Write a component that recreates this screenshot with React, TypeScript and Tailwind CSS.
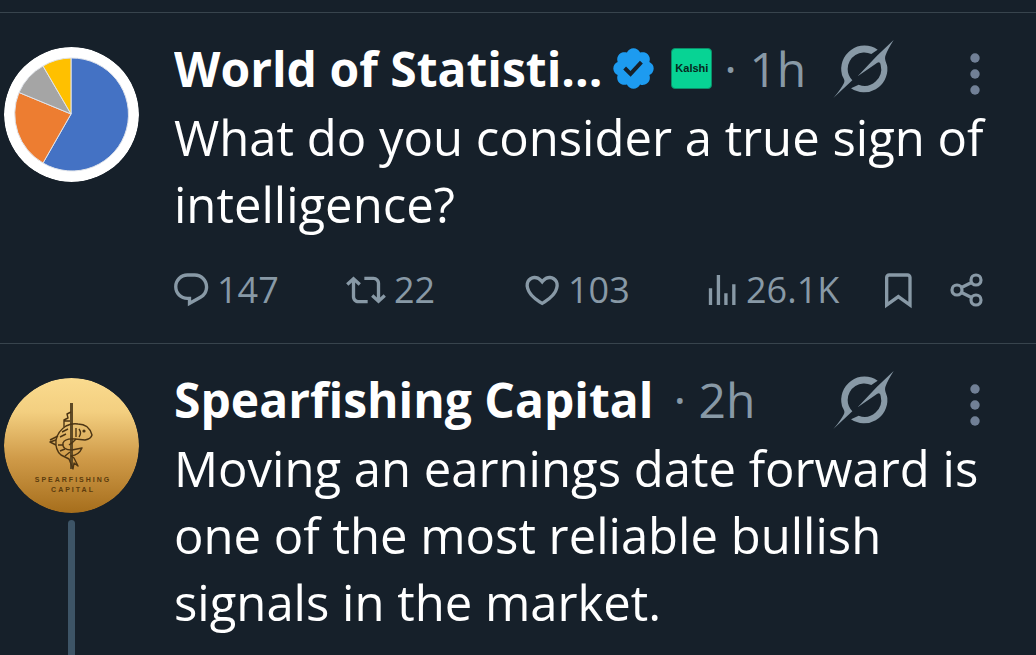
import type { ReactNode } from "react";

type PostProps = {
    avatar: ReactNode;
    name: string;
    badges?: ReactNode;
    time: string;
    children: ReactNode;
    actions?: ReactNode;
    thread?: boolean;
};

function PieAvatar() {
    return (
        <svg viewBox="0 0 135 135" className="size-[135px] rounded-full" aria-hidden="true">
            <circle cx="67.5" cy="67.5" r="67.5" fill="#fff" />
            <g stroke="#dfe3ea" strokeWidth="1">
                <path d="M67 67V11A56.5 56.5 0 1 1 39 116Z" fill="#4472c4" />
                <path d="M67 67L39 116A56.5 56.5 0 0 1 15 45.5Z" fill="#ed7d31" />
                <path d="M67 67L15 45.5A56.5 56.5 0 0 1 39 19Z" fill="#a5a5a5" />
                <path d="M67 67L39 19A56.5 56.5 0 0 1 67 11Z" fill="#ffc000" />
            </g>
        </svg>
    );
}

function FishAvatar() {
    return (
        <svg viewBox="0 0 135 135" className="size-[135px] rounded-full" aria-hidden="true">
            <defs>
                <linearGradient id="gold" x1="0" y1="0" x2="0" y2="1">
                    <stop offset="0" stopColor="#fadb8f" />
                    <stop offset="0.25" stopColor="#f3cf80" />
                    <stop offset="0.6" stopColor="#cf9a48" />
                    <stop offset="1" stopColor="#a66e1c" />
                </linearGradient>
            </defs>
            <circle cx="67.5" cy="67.5" r="67.5" fill="url(#gold)" />
            <path d="M67.5 25V91" stroke="#5f4a25" strokeWidth="3" fill="none" />
            <g fill="none" stroke="#4c3514" strokeWidth="1.4" strokeLinejoin="round">
                <path d="M88 57Q85 46 74 46Q68 45 62 48Q54 53 52 62Q51 72 57 77L65 81L69 91L70 85L74 88L70 80L67 78Q75 77 78 70L68 72Q58 72 59 65Q61 60 71 61L81 62Q87 61 88 57Z" />
                <path d="M60 49L60 42L64 40L63 36L67 34M60 43H66M52 62L46 64L52 67M46 62L54 58M72 50V59M75 51Q78 55 75 59" />
                <path d="M58 54L64 51M56 59L62 56M54 67L59 67M56 73L61 71M61 78L66 74M67 66L72 61M65 67L70 63" />
            </g>
            <circle cx="80" cy="53" r="1.6" fill="#4c3514" />
            <g
                fill="#5b3b0d"
                fontFamily="Liberation Sans, sans-serif"
                fontSize="7"
                fontWeight="700"
                textAnchor="middle"
                letterSpacing="2"
            >
                <text x="69" y="104">SPEARFISHING</text>
                <text x="69" y="114">CAPITAL</text>
            </g>
        </svg>
    );
}

function VerifiedBadge() {
    return (
        <svg viewBox="1 1 20 20" className="size-[43px] shrink-0" role="img" aria-label="Verified">
            <path
                fill="#1d9bf0"
                d="M20.396 11c-.018-.646-.215-1.275-.57-1.816-.354-.54-.852-.972-1.438-1.246.223-.607.27-1.264.14-1.897-.131-.634-.437-1.218-.882-1.687-.47-.445-1.053-.75-1.687-.882-.633-.13-1.29-.083-1.897.14-.273-.587-.704-1.086-1.245-1.44S11.647 1.62 11 1.604c-.646.017-1.273.213-1.813.568s-.969.854-1.24 1.44c-.608-.223-1.267-.272-1.902-.14-.635.13-1.22.436-1.69.882-.445.47-.749 1.055-.878 1.688-.13.633-.08 1.29.144 1.896-.587.274-1.087.705-1.443 1.245-.356.54-.555 1.17-.574 1.817.02.647.218 1.276.574 1.817.356.54.856.972 1.443 1.245-.224.606-.274 1.263-.144 1.896.13.634.433 1.218.877 1.688.47.443 1.054.747 1.687.878.633.132 1.29.084 1.897-.136.274.586.705 1.084 1.246 1.439.54.354 1.17.551 1.816.569.647-.016 1.276-.213 1.817-.567s.972-.854 1.245-1.44c.604.239 1.266.296 1.903.164.636-.132 1.22-.447 1.68-.907.46-.46.776-1.044.908-1.681s.075-1.299-.165-1.903c.586-.274 1.084-.705 1.439-1.246.354-.54.551-1.17.569-1.816zM9.662 14.85l-3.429-3.428 1.293-1.302 2.072 2.072 4.4-4.794 1.347 1.246z"
            />
        </svg>
    );
}

function KalshiBadge() {
    return (
        <span className="flex size-[41px] shrink-0 items-center justify-center rounded-sm border border-[#0b8f69] bg-[#07d394] font-['Liberation_Sans',sans-serif] text-[11px] font-bold text-[#06281d]">
            Kalshi
        </span>
    );
}

function GrokIcon() {
    return (
        <svg viewBox="36 23 186 180" className="h-[60px] w-[62px]" fill="currentColor" aria-hidden="true">
            <path d="M173 55A70 70 0 0 0 66 131C70 142 76 146 72 155Q62 175 40 200L97 147C88 137 83 126 83 113A50 50 0 0 1 154 68Z" />
            <path d="M221 26L171 73L113 135L172 94Q181 89 182 101A50 50 0 0 1 116 160L93 171A70 70 0 0 0 202 108C202 96 191 86 197 71Q203 55 221 26Z" />
        </svg>
    );
}

function DotsIcon() {
    return (
        <svg viewBox="0 0 10 42" className="h-[42px] w-[10px]" fill="#718096" aria-hidden="true">
            <circle cx="5" cy="5" r="4.7" />
            <circle cx="5" cy="21" r="4.7" />
            <circle cx="5" cy="37" r="4.7" />
        </svg>
    );
}

function ShareIcon() {
    return (
        <svg viewBox="0 0 34 34" className="size-[34px]" fill="none" stroke="currentColor" strokeWidth="3.2" aria-hidden="true">
            <circle cx="7" cy="17" r="5" />
            <circle cx="26" cy="7" r="5" />
            <circle cx="26" cy="27" r="5" />
            <path d="M11.5 14.5L21.5 9.5M11.5 19.5L21.5 24.5" />
        </svg>
    );
}

const paths = {
    reply: "M1.751 10c0-4.42 3.584-8 8.005-8h4.366c4.49 0 8.129 3.64 8.129 8.13 0 2.96-1.607 5.68-4.196 7.11l-8.054 4.46v-3.69h-.067c-4.49.1-8.183-3.51-8.183-8.01zm8.005-6c-3.317 0-6.005 2.69-6.005 6 0 3.37 2.77 6.08 6.138 6.01l.351-.01h1.761v2.3l5.087-2.81c1.951-1.08 3.163-3.13 3.163-5.36 0-3.39-2.744-6.13-6.129-6.13H9.756z",
    repost: "M4.5 3.88l4.432 4.14-1.364 1.46L5.5 7.55V16c0 1.1.896 2 2 2H13v2H7.5c-2.209 0-4-1.79-4-4V7.55L1.432 9.48.068 8.02 4.5 3.88zM16.5 6H11V4h5.5c2.209 0 4 1.79 4 4v8.45l2.068-1.93 1.364 1.46-4.432 4.14-4.432-4.14 1.364-1.46 2.068 1.93V8c0-1.1-.896-2-2-2z",
    like: "M16.697 5.5c-1.222-.06-2.679.51-3.89 2.16l-.805 1.09-.806-1.09C9.984 6.01 8.526 5.44 7.304 5.5c-1.243.07-2.349.78-2.91 1.91-.552 1.12-.633 2.78.479 4.82 1.074 1.97 3.257 4.27 7.129 6.61 3.87-2.34 6.052-4.64 7.126-6.61 1.111-2.04 1.03-3.7.477-4.82-.561-1.13-1.666-1.84-2.908-1.91zm4.187 7.69c-1.351 2.48-4.001 5.12-8.379 7.67l-.503.3-.504-.3c-4.379-2.55-7.029-5.19-8.382-7.67-1.36-2.5-1.41-4.86-.514-6.67.887-1.79 2.647-2.91 4.601-3.01 1.651-.09 3.368.56 4.798 2.01 1.429-1.45 3.146-2.1 4.796-2.01 1.954.1 3.714 1.22 4.601 3.01.896 1.81.846 4.17-.514 6.67z",
    views: "M8.75 21V3h2v18h-2zM18 21V8.5h2V21h-2zM4 21l.004-10h2L6 21H4zm9.248 0v-7h2v7h-2z",
    bookmark: "M4 4.5C4 3.12 5.119 2 6.5 2h11C18.881 2 20 3.12 20 4.5v18.44l-8-5.71-8 5.71V4.5zM6.5 4c-.276 0-.5.22-.5.5v14.56l6-4.29 6 4.29V4.5c0-.28-.224-.5-.5-.5h-11z",
};

function Action({ icon, viewBox, label, count }: { icon: keyof typeof paths; viewBox: string; label: string; count?: string }) {
    return (
        <button type="button" aria-label={count ? `${count} ${label}` : label} className="flex items-center gap-2 whitespace-nowrap">
            <svg viewBox={viewBox} className="h-10 w-auto shrink-0" fill="currentColor" aria-hidden="true">
                <path d={paths[icon]} />
            </svg>
            {count}
        </button>
    );
}

function Post({ avatar, name, badges, time, children, actions, thread }: PostProps) {
    return (
        <article className="flex gap-[35px] border-t border-[#38444d] pl-1 pr-14 last:flex-1">
            <div className="flex shrink-0 flex-col items-center gap-[7px] pt-[34px]">
                {avatar}
                {thread && <div className="w-[7px] flex-1 rounded-t-full bg-[#3d5466]" />}
            </div>
            <div className="min-w-0 flex-1 pt-[22px]">
                <header className="mb-[2px] flex h-[67px] items-center text-[#8899a6]">
                    <h2 className="truncate text-5xl leading-[67px] font-bold text-white">{name}</h2>
                    {badges}
                    <span className="ml-5 shrink-0 text-5xl leading-[67px]">· {time}</span>
                    <div className="ml-auto flex items-center gap-[76px]">
                        <button type="button" aria-label="Explain this post">
                            <GrokIcon />
                        </button>
                        <button type="button" aria-label="More" className="pt-[10px]">
                            <DotsIcon />
                        </button>
                    </div>
                </header>
                <p className="-mr-6 text-[49px] leading-[67px] text-white">{children}</p>
                {actions}
            </div>
        </article>
    );
}

export default function App() {
    return (
        <main className="flex min-h-screen flex-col bg-[#16202a] pt-3 font-['Open_Sans',sans-serif]">
            <Post
                avatar={<PieAvatar />}
                name="World of Statisti..."
                badges={
                    <div className="-mr-2 ml-[10px] flex shrink-0 items-center gap-4">
                        <VerifiedBadge />
                        <KalshiBadge />
                    </div>
                }
                time="1h"
                actions={
                    <div className="-mr-1 mb-[2px] grid h-[103px] grid-cols-[172fr_179fr_183fr_177fr_65fr_34fr] items-center text-4xl text-[#8899a6]">
                        <Action icon="reply" viewBox="1.7 0 21 24" label="replies" count="147" />
                        <Action icon="repost" viewBox="0 0 24 24" label="reposts" count="22" />
                        <Action icon="like" viewBox="1.7 0 21 24" label="likes" count="103" />
                        <Action icon="views" viewBox="3.5 0 18 24" label="views" count="26.1K" />
                        <Action icon="bookmark" viewBox="4 0 16 24" label="Bookmark" />
                        <button type="button" aria-label="Share">
                            <ShareIcon />
                        </button>
                    </div>
                }
            >
                What do you consider a true sign of intelligence?
            </Post>
            <Post avatar={<FishAvatar />} name="Spearfishing Capital" time="2h" thread>
                Moving an earnings date forward is one of the most reliable bullish signals in the market.
            </Post>
        </main>
    );
}
